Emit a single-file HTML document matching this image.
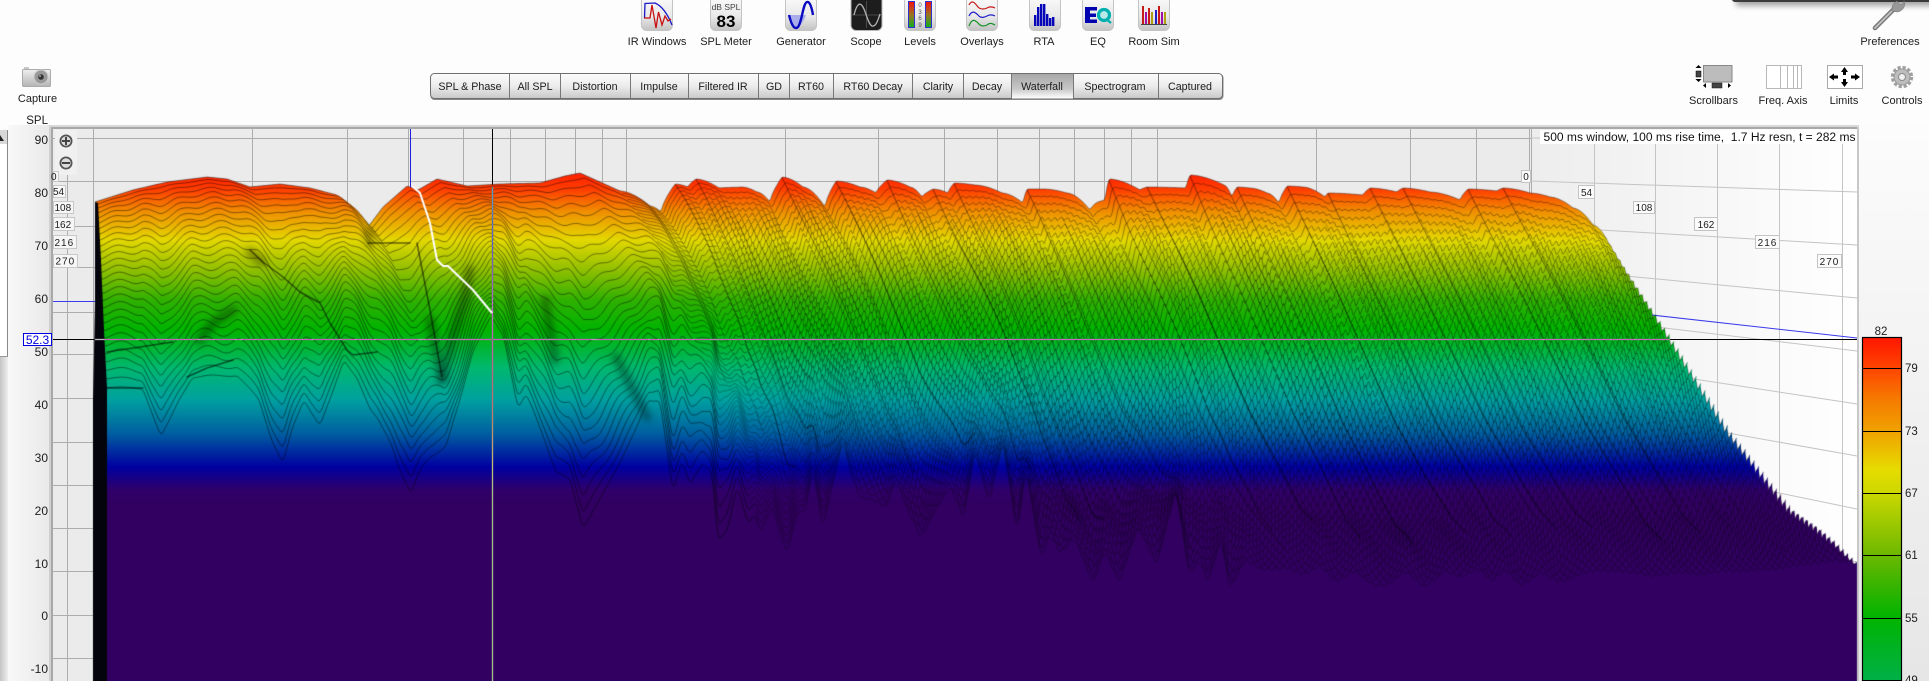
<!DOCTYPE html>
<html><head><meta charset="utf-8"><title>REW Waterfall</title>
<style>
html,body{margin:0;padding:0;background:#fdfdfd;width:1929px;height:681px;overflow:hidden}
svg,canvas{position:absolute;left:0;top:0;display:block}
text{font-family:"Liberation Sans",sans-serif;fill:#1c1c1c}
</style></head><body>
<svg width="1929" height="681" viewBox="0 0 1929 681" style="z-index:1">
<defs>
<linearGradient id="rc" x1="0" y1="0" x2="0" y2="1"><stop offset="0" stop-color="#fcfcfc"/><stop offset="1" stop-color="#e6e6e6"/></linearGradient>
<linearGradient id="lc" x1="0" y1="0" x2="1" y2="0"><stop offset="0" stop-color="#f8f8f8"/><stop offset="1" stop-color="#e9e9e9"/></linearGradient>
<linearGradient id="ls" x1="0" y1="0" x2="1" y2="0"><stop offset="0" stop-color="#c4c4c4"/><stop offset="1" stop-color="#eeeeee"/></linearGradient>
<linearGradient id="wall" x1="0" y1="0" x2="1" y2="0"><stop offset="0" stop-color="#ededed"/><stop offset="1" stop-color="#ffffff"/></linearGradient>
</defs>
<rect width="1929" height="681" fill="#fdfdfd"/>
<rect x="1857" y="125" width="72" height="556" fill="url(#rc)"/>
<rect x="8" y="125" width="42" height="556" fill="url(#lc)"/>
<rect x="0" y="357" width="8" height="324" fill="url(#ls)"/>
<rect x="0" y="130" width="7" height="227" fill="#fff"/>
<rect x="7" y="130" width="1" height="227" fill="#888"/>
<rect x="0" y="130" width="7" height="14" fill="#d8d8d8"/>
<path d="M0 141L4 141L0 135Z" fill="#222"/>
<rect x="0" y="356" width="8" height="1" fill="#999"/>
<!-- plot frame -->
<rect x="50" y="125" width="1809" height="556" fill="#a8a8a8"/>
<rect x="49" y="125" width="2" height="556" fill="#d0d0d0"/>
<rect x="50" y="125" width="1809" height="2" fill="#d8d8d8"/>
<rect x="1857" y="127" width="2" height="554" fill="#c8c8c8"/>
<rect x="53" y="129" width="1478" height="552" fill="#ebebeb"/>
<rect x="1531" y="129" width="326" height="552" fill="url(#wall)"/>
<g stroke="#adadad" stroke-width="1" fill="none" shape-rendering="crispEdges">
<path d="M53 138.5H1531M53 181.5H1531M53 226.5H1531M53 267.5H1531M53 312.5H1531M53 354.5H1531M53 398.5H1531M53 442.5H1531M53 485.5H1531M53 528.5H1531M53 571.5H1531M53 615.5H1531M53 658.5H1531"/>
<path d="M67.5 138V681M93.5 129V681M252.5 129V400M347.5 129V400M408.5 129V400M463.5 129V400M510.5 129V400M545.5 129V400M575.5 129V400M602.5 129V400M626.5 129V400M785.5 129V400M878.5 129V400M944.5 129V400M997.5 129V400M1039.5 129V400M1074.5 129V400M1104.5 129V400M1131.5 129V400M1157.5 129V400M1316.5 129V400M1410.5 129V400M1476.5 129V400M1529.5 129V400M1531.5 129V400"/>
</g>
<g stroke="#c4c4c4" stroke-width="1" fill="none">
<path d="M1531 138L1857 140M1531 181L1857 192M1531 226L1857 245M1531 267L1857 298M1531 312L1857 351M1531 354L1857 404M1531 398L1857 456M1531 442L1857 509M1531 485L1857 562"/>
<path d="M1594.5 144V681M1655.5 144V681M1717.5 144V681M1779.5 144V681M1842.5 144V681" shape-rendering="crispEdges"/>
</g>
<path d="M53 301.5H1531L1857 338" stroke="#3a3aee" stroke-width="1" fill="none"/>
<rect x="410" y="129" width="1" height="62" fill="#2020e0"/>
<rect x="492" y="129" width="1" height="60" fill="#000"/>
<rect x="53" y="339" width="45" height="1" fill="#000"/>
<rect x="1600" y="339" width="257" height="1" fill="#000"/>
</svg>
<canvas id="w" width="1929" height="681" style="z-index:2"></canvas>
<svg width="1929" height="681" viewBox="0 0 1929 681" style="z-index:3">
<defs>
<linearGradient id="btn" x1="0" y1="0" x2="0" y2="1"><stop offset="0" stop-color="#fbfbfb"/><stop offset=".6" stop-color="#e8e8e8"/><stop offset="1" stop-color="#c2c2c2"/></linearGradient>
<linearGradient id="tab" x1="0" y1="0" x2="0" y2="1"><stop offset="0" stop-color="#fcfcfc"/><stop offset=".5" stop-color="#ececec"/><stop offset="1" stop-color="#c8c8c8"/></linearGradient>
<linearGradient id="sel" x1="0" y1="0" x2="0" y2="1"><stop offset="0" stop-color="#a8a8a8"/><stop offset=".6" stop-color="#c6c6c6"/><stop offset="1" stop-color="#ffffff"/></linearGradient>
<linearGradient id="lev" x1="0" y1="0" x2="0" y2="1"><stop offset="0" stop-color="#f01010"/><stop offset=".5" stop-color="#a07020"/><stop offset="1" stop-color="#10b020"/></linearGradient>
<linearGradient id="cam" x1="0" y1="0" x2="0" y2="1"><stop offset="0" stop-color="#efefef"/><stop offset="1" stop-color="#b4b4b4"/></linearGradient>
<linearGradient id="bar" x1="0" y1="337" x2="0" y2="681" gradientUnits="userSpaceOnUse">
<stop offset="0" stop-color="#ff1500"/><stop offset=".09" stop-color="#ff4400"/><stop offset=".18" stop-color="#f57a00"/><stop offset=".27" stop-color="#f0a000"/><stop offset=".387" stop-color="#e6dc00"/><stop offset=".453" stop-color="#ccd800"/><stop offset=".634" stop-color="#6cb800"/><stop offset=".735" stop-color="#30b400"/><stop offset=".816" stop-color="#00b400"/><stop offset="1" stop-color="#00b048"/></linearGradient>
<filter id="sh" x="-5%" y="-50%" width="110%" height="300%"><feGaussianBlur stdDeviation="3"/></filter>
</defs>
<!-- top popup -->
<rect x="1736" y="-6" width="200" height="12" fill="#000" opacity=".35" filter="url(#sh)"/>
<rect x="1732" y="-8" width="200" height="10" rx="3" fill="#3a3a3a"/>
<!-- toolbar icons -->
<g stroke="#c4c4c4" fill="url(#btn)"><rect x="641.5" y="-4" width="31" height="34.5" rx="5"/><rect x="710.5" y="-4" width="31" height="34.5" rx="5"/><rect x="785.5" y="-4" width="31" height="34.5" rx="5"/><rect x="904.5" y="-4" width="31" height="34.5" rx="5"/><rect x="966.5" y="-4" width="31" height="34.5" rx="5"/><rect x="1029.5" y="-4" width="31" height="34.5" rx="5"/><rect x="1082.5" y="-4" width="31" height="34.5" rx="5"/><rect x="1138.5" y="-4" width="31" height="34.5" rx="5"/></g>
<path d="M644.5 18L645 3.5L655 3C662 6 668 15 672 25" fill="none" stroke="#1a1ac8" stroke-width="1.3"/>
<path d="M644 18H650L652 5L656 28L658.5 12L662 25L665 16L668 21L671 19" fill="none" stroke="#c81010" stroke-width="1.3"/>
<text x="726" y="10" font-size="8.5" text-anchor="middle" style="fill:#444">dB SPL</text>
<text x="726" y="27" font-size="17" font-weight="bold" text-anchor="middle" style="fill:#000">83</text>
<path d="M789 15H806C803 23 798 30 795 28C792 26 790 20 789 15Z" fill="#a9aeea"/>
<path d="M789 15C792 27 795 30 798 27C802 22 803 3 807 2C810 1 812 9 813 15" fill="none" stroke="#0a0ac0" stroke-width="2.4"/>
<rect x="851" y="-4" width="31" height="34.5" rx="5" fill="#1d1d1d" stroke="#b8b8b8"/>
<path d="M866.5 1V28M852 15H881" stroke="#555" stroke-width=".8"/>
<path d="M854 15C857 3 860 2 863 7C866 12 868 24 872 26C876 27 878 20 880 14" fill="none" stroke="#b4b4b4" stroke-width="1.3"/>
<rect x="908.5" y="1.5" width="6" height="26" fill="url(#lev)" stroke="#3030d0"/>
<rect x="925.5" y="1.5" width="6" height="26" fill="url(#lev)" stroke="#3030d0"/>
<g font-size="6" text-anchor="middle" style="fill:#555"><text x="920" y="7" style="fill:#555">0</text><text x="920" y="14" style="fill:#555">3</text><text x="920" y="20" style="fill:#555">6</text><text x="920" y="27" style="fill:#555">9</text></g>
<path d="M969 5C972 -1 975 3 978 7C981 10 985 9 987 8C990 6 993 7 995 8" fill="none" stroke="#c81818" stroke-width="1.2"/>
<path d="M969 16C972 10 975 12 978 15C981 19 985 17 987 16C990 14 993 15 995 16" fill="none" stroke="#2020c8" stroke-width="1.2"/>
<path d="M969 26C972 18 975 20 978 23C981 27 985 26 987 25C990 22 993 24 995 25" fill="none" stroke="#109020" stroke-width="1.2"/>
<g fill="#0606b8"><rect x="1034" y="15" width="2.4" height="11"/><rect x="1037" y="7" width="2.4" height="19"/><rect x="1040" y="4" width="2.4" height="22"/><rect x="1043" y="4" width="2.4" height="22"/><rect x="1046" y="14" width="2.4" height="12"/><rect x="1049" y="18" width="2.4" height="8"/><rect x="1052" y="17" width="2.4" height="9"/></g>
<path d="M1085 7H1097V10.5H1090V13.5H1096V17H1090V19.5H1097V23H1085Z" fill="#0000b0"/>
<circle cx="1104" cy="15" r="5.5" fill="#b8e8e8" stroke="#00b0b0" stroke-width="3.2"/>
<path d="M1106 19L1111 23" stroke="#00b0b0" stroke-width="2.4"/>
<g><rect x="1142" y="6" width="2" height="18" fill="#c81818"/><rect x="1145" y="12" width="2" height="12" fill="#a010a8"/><rect x="1148" y="8" width="2" height="16" fill="#c81818"/><rect x="1151" y="12" width="2" height="12" fill="#b0a010"/><rect x="1155" y="10" width="2" height="14" fill="#2020c8"/><rect x="1158" y="6" width="2" height="18" fill="#c81818"/><rect x="1161" y="12" width="2" height="12" fill="#a010a8"/><rect x="1164" y="12" width="2" height="12" fill="#b0a010"/><rect x="1141" y="24" width="26" height="1" fill="#444"/></g>
<!-- toolbar labels -->
<g font-size="11" text-anchor="middle">
<text x="657" y="45">IR Windows</text><text x="726" y="45">SPL Meter</text><text x="801" y="45">Generator</text><text x="866" y="45">Scope</text><text x="920" y="45">Levels</text><text x="982" y="45">Overlays</text><text x="1044" y="45">RTA</text><text x="1098" y="45">EQ</text><text x="1154" y="45">Room Sim</text><text x="1890" y="45">Preferences</text>
<text x="37.5" y="102">Capture</text><text x="1713.5" y="104">Scrollbars</text><text x="1783" y="104">Freq. Axis</text><text x="1844" y="104">Limits</text><text x="1902" y="104">Controls</text>
</g>
<!-- wrench -->
<path d="M1875 28L1894 9" stroke="#777" stroke-width="4.6" stroke-linecap="round"/>
<path d="M1875 28L1894 9" stroke="#c4c4c4" stroke-width="1.8" stroke-linecap="round"/>
<path d="M1892 11C1891 6 1894 3 1897 1L1899 4L1902 5L1904 1C1906 6 1903 11 1897 12Z" fill="#999" stroke="#777" stroke-width=".6"/>
<!-- capture -->
<rect x="24" y="67" width="5" height="3" fill="#c8c8c8"/>
<rect x="22.5" y="69.5" width="28" height="17" rx="1" fill="url(#cam)" stroke="#aaa"/>
<circle cx="41" cy="77" r="7" fill="#999" stroke="#ccc"/><circle cx="41" cy="77" r="2.8" fill="#333"/><circle cx="40" cy="76" r="1" fill="#aaa"/>
<!-- right icons -->
<rect x="1703.5" y="65.5" width="28.5" height="16.5" fill="#bcbcbc" stroke="#888"/>
<path d="M1698.5 65L1701.5 68H1695.5ZM1698.5 82L1701.5 79H1695.5Z" fill="#000"/><rect x="1696" y="71" width="5" height="6" fill="#444" stroke="#000" stroke-width=".5"/>
<path d="M1703 85.5L1706 83V88ZM1731 85.5L1728 83V88Z" fill="#000"/><rect x="1712" y="83" width="10" height="5" fill="#444" stroke="#111" stroke-width=".5"/>
<rect x="1766.5" y="65.5" width="35" height="23" fill="#fff" stroke="#b8b8b8"/>
<path d="M1780.5 65V88M1787.5 65V88M1793.5 65V88M1797.5 65V88" stroke="#b8b8b8"/>
<rect x="1827.5" y="65.5" width="35" height="23" fill="#fff" stroke="#aaa"/>
<path d="M1844.5 67L1848 72H1846V75H1843V72H1841ZM1844.5 87L1848 82H1846V79H1843V82H1841ZM1829 77L1834 73.5V75.5H1838V78.5H1834V80.5ZM1860 77L1855 73.5V75.5H1851V78.5H1855V80.5Z" fill="#000"/>
<circle cx="1902" cy="77" r="9.5" fill="none" stroke="#a0a0a0" stroke-width="3.4" stroke-dasharray="3.2 1.8"/>
<circle cx="1902" cy="77" r="8" fill="#bdbdbd" stroke="#999"/>
<circle cx="1902" cy="77" r="3.5" fill="#f0f0f0" stroke="#8a8a8a"/>
<!-- tabs -->
<rect x="430.5" y="74" width="793" height="26" rx="4" fill="#888"/>
<rect x="430.5" y="73.5" width="792" height="25" rx="4" fill="url(#tab)" stroke="#6e6e6e"/>
<rect x="1012" y="74" width="61" height="24.5" fill="url(#sel)"/>
<path d="M509.5 74V98M560.5 74V98M630.5 74V98M688.5 74V98M758.5 74V98M789.5 74V98M833.5 74V98M912.5 74V98M963.5 74V98M1011.5 74V98M1073.5 74V98M1158.5 74V98" stroke="#777"/>
<g font-size="10.7" text-anchor="middle">
<text x="470" y="90">SPL &amp; Phase</text><text x="535" y="90">All SPL</text><text x="595" y="90">Distortion</text><text x="659" y="90">Impulse</text><text x="723" y="90">Filtered IR</text><text x="774" y="90">GD</text><text x="811" y="90">RT60</text><text x="873" y="90">RT60 Decay</text><text x="938" y="90">Clarity</text><text x="987" y="90">Decay</text><text x="1042" y="90">Waterfall</text><text x="1115" y="90">Spectrogram</text><text x="1190" y="90">Captured</text>
</g>
<!-- zoom buttons -->
<rect x="55" y="130" width="22" height="45" fill="#f0f0f0"/>
<circle cx="66" cy="141" r="5.6" fill="#ddd" stroke="#555" stroke-width="1.8"/><path d="M62 141H70M66 137V145" stroke="#444" stroke-width="2"/>
<circle cx="66" cy="163" r="5.6" fill="#ddd" stroke="#555" stroke-width="1.8"/><path d="M62 163H70" stroke="#444" stroke-width="2"/>
<!-- axis labels -->
<text x="48" y="124" font-size="11.5" text-anchor="end">SPL</text>
<g font-size="12" text-anchor="end">
<text x="48" y="144">90</text><text x="48" y="197">80</text><text x="48" y="250">70</text><text x="48" y="303">60</text><text x="48" y="356">50</text><text x="48" y="409">40</text><text x="48" y="462">30</text><text x="48" y="515">20</text><text x="48" y="568">10</text><text x="48" y="620">0</text><text x="48" y="673">-10</text>
</g>
<rect x="23.5" y="333.5" width="28" height="12" fill="#fff" stroke="#0000e0"/>
<text x="37.5" y="344" font-size="12" text-anchor="middle" style="fill:#0000e0">52.3</text>
<!-- left time labels -->
<g fill="#f6f6f6" stroke="#c8c8c8">
<rect x="53.5" y="171.5" width="5" height="10"/><rect x="53.5" y="185.5" width="12" height="12"/><rect x="53.5" y="201.5" width="20" height="12"/><rect x="53.5" y="217.5" width="21" height="13"/><rect x="53.5" y="235.5" width="23" height="13"/><rect x="53.5" y="254.5" width="24" height="13"/></g>
<g font-size="10">
<text x="51" y="180">0</text><text x="53" y="195">54</text><text x="54.5" y="211">108</text><text x="54.5" y="228">162</text><text x="54.5" y="246" letter-spacing="1">216</text><text x="55.5" y="264.5" letter-spacing="1">270</text></g>
<!-- right time labels -->
<g fill="#fbfbfb" stroke="#c4c4c4">
<rect x="1521.5" y="170.5" width="9" height="12"/><rect x="1578.5" y="185.5" width="16" height="13"/><rect x="1633.5" y="201.5" width="21" height="12"/><rect x="1694.5" y="217.5" width="23" height="13"/><rect x="1755.5" y="235.5" width="24" height="13"/><rect x="1817.5" y="254.5" width="24" height="13"/></g>
<g font-size="10" text-anchor="middle">
<text x="1526" y="180">0</text><text x="1586.5" y="196">54</text><text x="1644" y="211">108</text><text x="1706" y="228">162</text><text x="1767.5" y="246" letter-spacing="1">216</text><text x="1829.5" y="265" letter-spacing="1">270</text></g>
<!-- title -->
<rect x="1540" y="130" width="317" height="14" fill="#fff"/>
<text x="1543.5" y="141" font-size="11.5" textLength="312" lengthAdjust="spacingAndGlyphs" xml:space="preserve" style="fill:#111;white-space:pre">500 ms window, 100 ms rise time,  1.7 Hz resn, t = 282 ms</text>
<!-- colour bar -->
<rect x="1862.5" y="337.5" width="39" height="350" fill="url(#bar)" stroke="#000" stroke-width="1.2"/>
<path d="M1862 368.5H1902M1862 431.5H1902M1862 493.5H1902M1862 555.5H1902M1862 618.5H1902M1862 680.5H1902" stroke="#000" stroke-width="1"/>
<g font-size="11.5"><text x="1881" y="335" text-anchor="middle">82</text><text x="1905" y="372">79</text><text x="1905" y="435">73</text><text x="1905" y="497">67</text><text x="1905" y="559">61</text><text x="1905" y="622">55</text><text x="1905" y="684">49</text></g>
</svg>
<script>
(function(){
var cv=document.getElementById('w'),c=cv.getContext('2d');
var P=[95,202,133,190,167,182,207,177,227,179,250,187,280,184,310,188,337,195,353,207,368,227,383,207,407,186,418,190,437,179,467,186,500,184,540,183,565,176,580,173,600,182,620,191,650,206,661,212,675,184,688,187,696,179,719,188,742,187,757,192,770,202,782,177,803,187,825,207,836,181,860,187,876,193,887,180,910,187,922,197,933,189,948,193,954,183,975,185,1002,193,1023,203,1027,189,1044,189,1067,193,1090,210,1096,203,1105,200,1109,179,1140,190,1147,187,1186,188,1190,175,1224,185,1232,197,1237,187,1250,188,1267,193,1279,203,1287,186,1303,187,1325,197,1328,193,1363,195,1370,188,1397,192,1403,188,1430,192,1460,200,1468,189,1497,191,1503,188,1530,193,1550,197,1573,208,1593,225,1607,240];
var L=[95,388,107,388,143,388,154,418,161,437,170,420,179,400,192,377,237,375,259,400,272,440,283,463,292,430,304,400,320,425,332,395,344,360,357,377,370,410,378,420,391,442,400,470,411,495,420,470,429,457,446,447,460,400,473,350,491,317,504,337,518,408,526,395,533,410,545,440,556,472,570,480,583,527,600,500,614,473,636,430,648,400,660,400,673,493,682,460,690,483,702,465,712,473,718,540,728,528,737,487,748,523,755,513,761,532,772,507,787,553,797,513,805,512,813,470,823,527,837,467,843,440,852,477,860,497,873,500,886,507,896,480,908,510,921,538,935,510,950,487,964,518,975,450,989,503,1003,443,1017,533,1026,470,1041,558,1050,535,1061,553,1074,537,1093,583,1105,550,1119,582,1138,527,1157,563,1176,490,1189,573,1200,560,1208,582,1221,540,1230,588,1245,560,1262,570,1285,567,1304,575,1320,565,1336,582,1355,570,1374,585,1387,585,1405,570,1425,587,1445,570,1463,577,1478,568,1492,580,1505,570,1521,585,1540,572,1559,582,1585,572,1616,570,1630,572,1653,575,1680,572,1703,573,1730,570,1753,570,1800,565,1833,560,1857,563];
function tab(A,dome){var T=[],i=0,n=A.length;for(var v=0;v<=1900;v++){while(i<n-4&&v>A[i+2])i+=2;var f=(v-A[i])/(A[i+2]-A[i]);f=f<0?0:f>1?1:f;if(dome&&A[i+3]>A[i+1]&&v>620)f=Math.pow(f,1.7);else if(dome&&v>620)f=Math.pow(f,.7);T[v]=A[i+1]+f*(A[i+3]-A[i+1]);}return T;}
function smooth(T,r){var O=[];for(var i=0;i<T.length;i++){var s=0,m=0;for(var j=-r;j<=r;j++){var q=T[i+j];if(q!==undefined){s+=q;m++;}}O[i]=s/m;}return O;}
var PT=smooth(tab(P,true),1),LT=smooth(tab(L),2),LS=smooth(smooth(LT,30),20);
function at(T,v){var a=Math.floor(v),f=v-a;return T[a]*(1-f)+T[a+1]*f;}
function S(u){return 12+238*Math.pow(Math.max(0,(u-95))/1512,.6);}
var GR=[0,0,.1,.12,.25,.293,.5,.6,.75,.85,1,1];
function gr(t){for(var i=0;i<GR.length-2;i+=2){if(t<=GR[i+2]){return GR[i+1]+(t-GR[i])/(GR[i+2]-GR[i])*(GR[i+3]-GR[i+1]);}}return 1;}
function ss(a){a=a<0?0:a>1?1:a;return a*a*(3-2*a);}
var stops=[[165,'#ff1000'],[190,'#ff4000'],[212,'#f09000'],[240,'#e4d800'],[270,'#90c000'],[300,'#30b000'],[330,'#00b400'],[368,'#00b870'],[400,'#00a0a0'],[433,'#0060a0'],[467,'#0000a0'],[490,'#30006a'],[505,'#310060'],[681,'#310060']];
var G=c.createLinearGradient(0,0,0,681);
stops.forEach(function(s){G.addColorStop(s[0]/681,s[1]);});
var TWO=Math.PI*2,N=56;
function pt(u,t){
 var X=u+t*S(u),m=ss((u-500)/400),gl=Math.pow(t,1.3),g=gl*(1-m)+gr(t)*m;
 var ls=at(LS,X),q=1.3*(1-m)+4.5*m;
 var y=PT[u]+(ls-PT[u])*g+(at(LT,X)-ls)*Math.pow(t,q);
 var env=Math.min(1,t*7)*Math.min(1,(1-t)*6+.2);
 var m2=ss((u-620)/120);
 y+=env*(1-m2)*(1+4.5*t)*Math.sin(TWO*u/31+1.3*Math.sin(u/97)+t*2);
 y+=env*m2*(3.2+3.5*t)*Math.sin(TWO*u/6.6+.9*Math.sin(u/41)+.5*Math.sin(TWO*u/6.6));
 y+=env*m2*2.4*Math.sin(TWO*u/38+t*5);
 return [X,y];
}
c.lineJoin='round';
for(var k=0;k<=N;k++){
 var t=k/N,pts=[];
 for(var u=95;u<=1607;u++)pts.push(pt(u,t));
 var e=pts[pts.length-1];
 c.beginPath();c.moveTo(pts[0][0],681);
 for(var i=0;i<pts.length;i++)c.lineTo(pts[i][0],pts[i][1]);
 c.lineTo(e[0],681);c.closePath();c.fillStyle=G;c.fill();
 c.lineWidth=.7;c.strokeStyle='rgba(0,0,0,.66)';
 if(k%2==0){c.beginPath();c.moveTo(pts[0][0],pts[0][1]);for(i=1;i<=525;i++)c.lineTo(pts[i][0],pts[i][1]);c.stroke();}
 c.lineWidth=.65;c.strokeStyle=t>.6?'rgba(0,0,0,.42)':'rgba(0,0,0,.58)';
 c.beginPath();c.moveTo(pts[525][0],pts[525][1]);for(i=526;i<pts.length;i++)c.lineTo(pts[i][0],pts[i][1]);c.stroke();
}
/* ridge chains: diagonal bunches running down-right */
function chain(p,from,to){c.beginPath();for(var q=from;q<=to;q++){var a=pt(p,q/56);if(q==from)c.moveTo(a[0],a[1]);else c.lineTo(a[0],a[1]);}c.stroke();}
var peaks=[675,696,782,836,887,933,954,1027,1109,1147,1190,1237,1287,1328,1370,1403,1468,1503];
c.lineWidth=1.1;c.strokeStyle='rgba(0,0,0,.38)';
peaks.forEach(function(p){chain(p,0,46);});
c.lineWidth=.9;c.strokeStyle='rgba(0,0,0,.24)';
for(var w=640,j=0;w<1570;j++){chain(w,4+j%5,34+(j*7)%20);w+=19+(j*13)%17;}
/* soft dark bunching and thin occlusion ridges */
function poly(r){c.beginPath();r.forEach(function(p,i){if(i)c.lineTo(p[0],p[1]);else c.moveTo(p[0],p[1]);});c.stroke();}
c.lineCap='round';
c.filter='blur(3px)';c.strokeStyle='rgba(0,0,0,.32)';c.lineWidth=9;
[[[442,380],[452,340],[464,300],[470,270]],[[200,340],[213,323],[233,310]],[[250,252],[262,262]],[[368,232],[370,243]],[[616,357],[647,417]],[[545,300],[555,360]],[[430,320],[442,378]]].forEach(poly);
c.filter='blur(.6px)';c.strokeStyle='rgba(0,0,0,.55)';c.lineWidth=1.5;
[[[250,250],[263,262],[283,277],[300,292],[320,303],[330,323],[347,350],[353,355],[377,352]],[[368,243],[410,243]],[[417,243],[430,310],[442,377]],[[233,360],[207,368],[187,377]],[[107,352],[173,342]],[[107,388],[143,388]]].forEach(poly);
c.filter='none';
/* black side */
c.fillStyle='#04040c';c.beginPath();
[[95,202],[98,203],[101,260],[104,330],[107,388],[107,681],[93,681],[93,400],[95,300]].forEach(function(p,i){if(i)c.lineTo(p[0],p[1]);else c.moveTo(p[0],p[1]);});c.closePath();c.fill();
/* cursors */
c.globalCompositeOperation='difference';c.fillStyle='#fff';
c.fillRect(95,339,1575,1);c.fillRect(492,187,1,494);
c.globalCompositeOperation='source-over';
c.strokeStyle='#fff';c.lineWidth=2;c.lineCap='butt';c.beginPath();
[[412,186],[420,193],[430,223],[437,260],[443,266],[448,266],[473,290],[492,313]].forEach(function(p,i){if(i)c.lineTo(p[0],p[1]);else c.moveTo(p[0],p[1]);});c.stroke();
})();
</script>
</body></html>
